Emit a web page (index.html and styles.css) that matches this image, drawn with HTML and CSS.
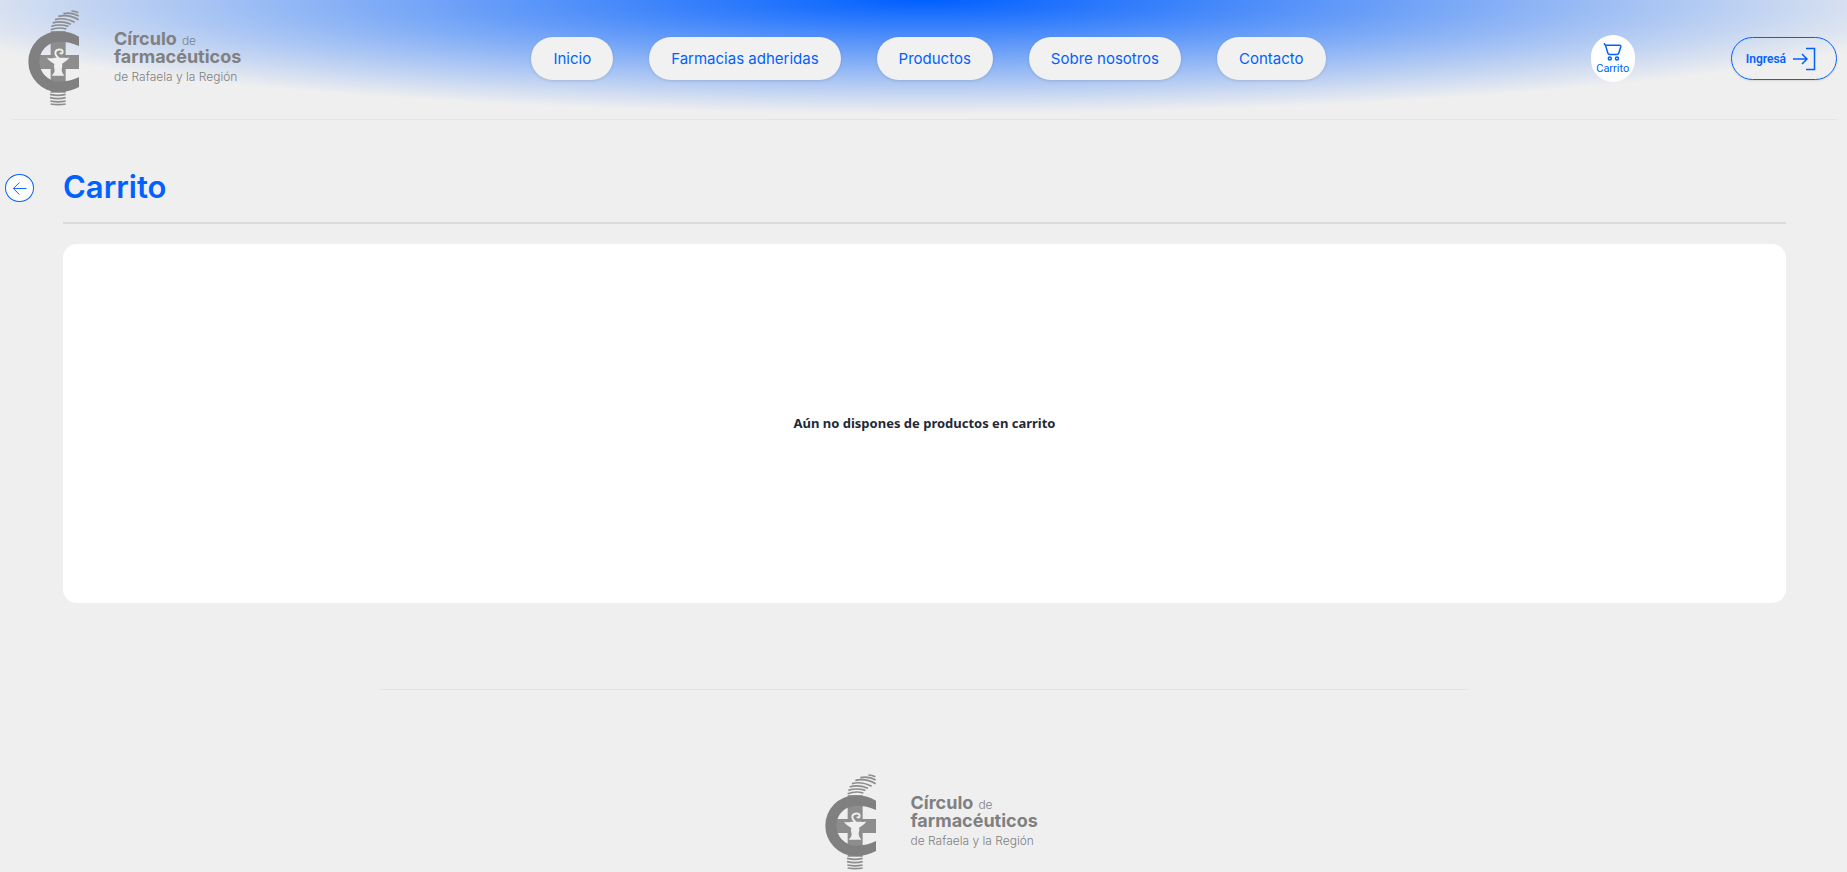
FILE: index.html
```html
<!DOCTYPE html>
<html lang="es">
<head>
<meta charset="utf-8">
<meta name="viewport" content="width=device-width, initial-scale=1">
<title>Carrito</title>
<link rel="stylesheet" href="styles.css">
</head>
<body>
<svg class="sprite" aria-hidden="true">
  <symbol id="emblem" viewBox="0 0 210 330">
    <path class="bar" d="M92 82H137V153H177V195H137V266H92V195H50V153H92Z"/>
    <path class="ring" d="M177 98Q150 82 115 82A90 91 0 0 0 115 264Q150 264 177 249V219Q150 233 118 233A60 60 0 0 1 118 113Q150 113 177 126Z"/>
    <path class="cup" d="M81 161Q93 165 102 161H134Q142 163 148 160C144 169 135 172 126 180C129 186 125 191 125 198C125 206 130 211 133 215H95C99 211 104 206 104 199C104 193 100 189 103 180C94 173 84 169 81 161Z"/>
    <path class="snake" d="M117 164C109 157 105 153 106 146C107 134 128 133 128 143C128 149 122 150 120 146"/>
    <path class="stripes" d="M92 77Q116 68 139 75M94 67Q119 59 145 67M98 57Q123 49 153 61M105 47Q132 39 164 55M115 37Q146 30 176 47M130 29Q156 24 176 36M154 21Q166 21 175 26M90 271Q114 277 137 271M90 281Q114 287 137 281M91 291Q114 296 137 291M92 300Q114 304 137 300"/>
  </symbol>
</svg>
<header class="header">
  <div class="header-bar">
    <div class="header-side">
      <a class="logo" href="#">
        <svg class="logo-mark" aria-hidden="true"><use href="#emblem"/></svg>
        <span class="logo-text"><span><b>Círculo</b> <small>de</small></span><b>farmacéuticos</b><small class="logo-place">de Rafaela y la Región</small></span>
      </a>
    </div>
    <nav class="nav">
      <a class="pill" href="#">Inicio</a>
      <a class="pill" href="#">Farmacias adheridas</a>
      <a class="pill" href="#">Productos</a>
      <a class="pill" href="#">Sobre nosotros</a>
      <a class="pill" href="#">Contacto</a>
    </nav>
    <div class="header-side header-actions">
      <button class="cart" type="button">
        <svg class="cart-icon" viewBox="0 0 20 20" aria-hidden="true"><path d="M1 1.2 2.5 3.3 4.8 11Q5.2 12.5 6.8 12.5H13.8Q15.3 12.5 15.8 11L17.7 5Q18.2 3.2 16.5 3.2H2.5"/><circle cx="6.8" cy="16.5" r="1.5"/><circle cx="14" cy="16.5" r="1.5"/></svg>
        <span>Carrito</span>
      </button>
      <button class="login" type="button">
        <span>Ingresá</span>
        <svg class="login-icon" viewBox="0 0 24 24" aria-hidden="true"><path d="M1 12H15M10 7 15 12 10 17M14 1.5H22.5V22.5H14"/></svg>
      </button>
    </div>
  </div>
</header>
<main class="main">
  <div class="heading">
    <button class="back" type="button" aria-label="Volver">
      <svg class="back-icon" viewBox="0 0 16 16" aria-hidden="true"><path d="M15.5 8H1.5M8 1.5 1.5 8 8 14.5"/></svg>
    </button>
    <h1 class="title">Carrito</h1>
  </div>
  <section class="card">
    <p class="empty">Aún no dispones de productos en carrito</p>
  </section>
</main>
<footer class="footer">
  <a class="logo" href="#">
    <svg class="logo-mark" aria-hidden="true"><use href="#emblem"/></svg>
    <span class="logo-text"><span><b>Círculo</b> <small>de</small></span><b>farmacéuticos</b><small class="logo-place">de Rafaela y la Región</small></span>
  </a>
</footer>
</body>
</html>
```
FILE: styles.css
```css
* { box-sizing: border-box; }
body {
  margin: 0;
  background: #efefef;
  color: #1f2937;
  font-family: Inter, "Liberation Sans", sans-serif;
}
a { color: inherit; text-decoration: none; }
button { padding: 0; border: 0; background: none; color: #0061ff; cursor: pointer; }
svg { fill: none; stroke: currentColor; }
.sprite { position: absolute; width: 0; height: 0; }

.header {
  padding: 0 10px 0 12px;
  background: radial-gradient(56% 114px at 50% 0, #005fff, #efefef);
}
.header-bar {
  display: flex;
  align-items: center;
  height: 120px;
  padding-bottom: 2px;
  border-bottom: 1px solid #e4e4e4;
}
.header-side { display: flex; flex: 1; align-items: center; }
.header-actions { justify-content: flex-end; gap: 96px; }

.logo { display: flex; gap: 24px; width: 230px; padding-left: 8px; color: #808080; }
.logo-mark { flex: none; width: 70px; height: 110px; }
.bar { fill: #8d8d8d; stroke: none; }
.ring { fill: #808080; stroke: none; }
.cup { fill: #efefef; stroke: none; }
.snake { stroke: #efefef; stroke-width: 6; }
.stripes { stroke: #8d8d8d; stroke-width: 5; }
.logo-text {
  display: flex;
  flex-direction: column;
  justify-content: center;
  padding-bottom: 5px;
  font-size: 18px;
  line-height: 18px;
  white-space: nowrap;
}
.logo-text small { font-size: 12px; font-weight: 300; line-height: 12px; }
.logo-text .logo-place { padding-top: 5px; }

.nav { display: flex; gap: 36px; padding-left: 8px; }
.pill {
  padding: 0 22px;
  border-radius: 22px;
  background: #f1f1f1;
  box-shadow: 0 1px 3px rgb(0 0 0 / 12%);
  color: #0061ff;
  font-size: 15px;
  line-height: 43px;
  white-space: nowrap;
}

.cart {
  display: flex;
  flex-direction: column;
  align-items: center;
  justify-content: center;
  width: 44px;
  height: 47px;
  border-radius: 22px;
  background: #fff;
  font: 11px/13px Roboto, sans-serif;
}
.cart-icon { width: 20px; height: 20px; stroke-width: 1.5; }
.login {
  display: flex;
  align-items: center;
  gap: 6px;
  height: 43px;
  padding: 0 20px 0 14px;
  border: 1px solid #0061ff;
  border-radius: 22px;
  box-shadow: 0 1px 2px rgb(0 0 0 / 10%);
  font: 600 12px/16px Roboto, sans-serif;
}
.login-icon { width: 24px; height: 24px; stroke-width: 1.5; }

.main { padding: 44px 61px 0 63px; }
.heading {
  position: relative;
  display: flex;
  align-items: center;
  height: 60px;
  padding-bottom: 12px;
  border-bottom: 2px solid #dadada;
}
.back {
  position: absolute;
  top: 10px;
  left: -58px;
  display: flex;
  align-items: center;
  justify-content: center;
  width: 29px;
  height: 28px;
  border: 1px solid #0061ff;
  border-radius: 50%;
  background: #fff;
}
.back-icon { width: 15px; height: 15px; stroke-width: 1; }
.title { margin: 0; color: #0061ff; font-size: 31px; font-weight: 600; line-height: 40px; }
.card {
  display: flex;
  align-items: center;
  justify-content: center;
  min-height: 359px;
  margin-top: 20px;
  padding-bottom: 2px;
  border-radius: 14px;
  background: #fff;
}
.empty { margin: 0; font: 700 13px/20px "Noto Sans", sans-serif; }

.footer {
  display: flex;
  justify-content: center;
  width: 59%;
  margin: 86px auto 0;
  padding: 78px 0 0;
  border-top: 1px solid #e4e4e4;
}
```
